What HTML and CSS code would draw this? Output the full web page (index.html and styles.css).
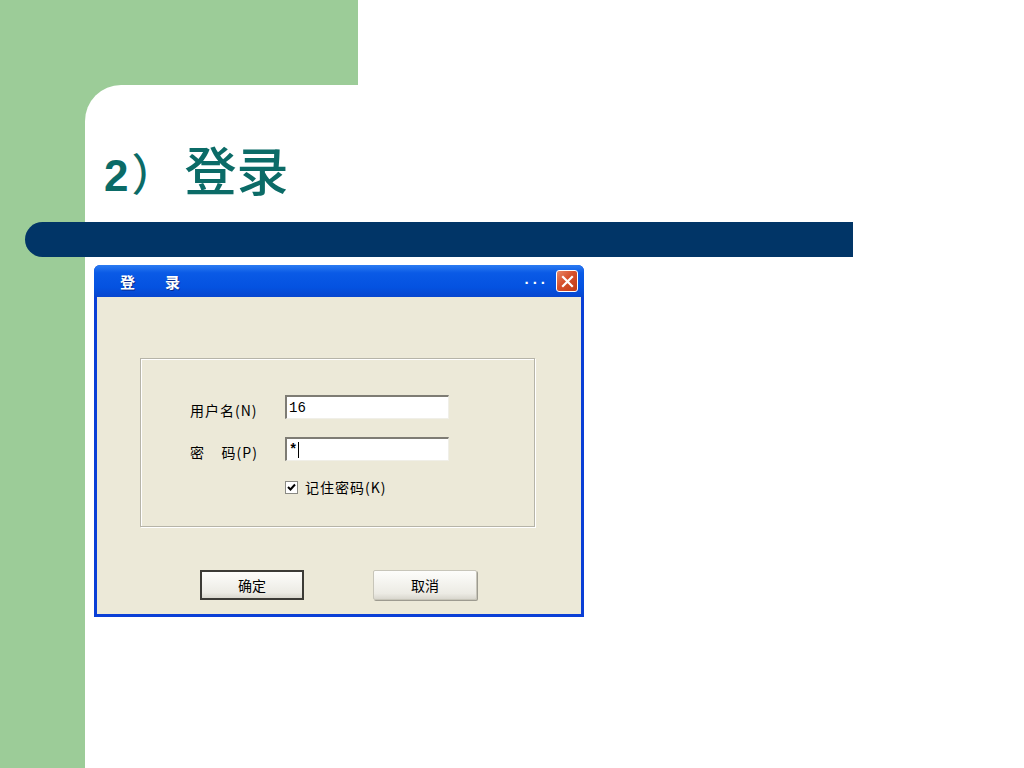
FILE: index.html
```html
<!DOCTYPE html>
<html lang="zh-CN">
<head>
  <meta charset="UTF-8" />
  <title>2）登录</title>
  <link rel="stylesheet" href="styles.css">
</head>
<body>
  <div class="page">
    <!-- left green rail -->
    <div class="rail"></div>

    <div class="main">
      <div class="top">
        <div class="top-green"></div>
      </div>

      <div class="content">
        <h1 class="title"><span class="num">2</span><span class="paren">）</span>登录</h1>
        <div class="bar"></div>

        <!-- XP style login dialog -->
        <div class="dialog">
          <div class="titlebar">
            <span class="caption">登　录</span>
            <span class="dots">...</span>
            <span class="close">
              <svg width="13" height="13" viewBox="0 0 13 13">
                <path d="M2 2 L11 11 M11 2 L2 11" stroke="#fff" stroke-width="2.2" stroke-linecap="square" />
              </svg>
            </span>
          </div>
          <div class="dialog-body">
            <div class="groupbox">
              <div class="row">
                <label class="label">用户名(N)</label>
                <div class="field">16</div>
              </div>
              <div class="row">
                <label class="label">密&nbsp;&nbsp;&nbsp;&nbsp;码(P)</label>
                <div class="field"><span class="star">*</span><span class="caret"></span></div>
              </div>
              <div class="check-row">
                <span class="checkbox">
                  <svg width="9" height="9" viewBox="0 0 9 9">
                    <path d="M1 4 L3.5 6.5 L8 1.5" stroke="#000" stroke-width="2" fill="none" />
                  </svg>
                </span>
                <span class="check-label">记住密码(K)</span>
              </div>
            </div>
            <div class="buttons">
              <button class="btn btn-default">确定</button>
              <button class="btn">取消</button>
            </div>
          </div>
        </div>
      </div>
    </div>
  </div>
</body>
</html>
```

FILE: styles.css
```css
* {
  margin: 0;
  padding: 0;
  box-sizing: border-box;
}

html, body {
  background: #fff;
  font-family: "Liberation Sans", "Noto Sans CJK SC", sans-serif;
}

.page {
  display: flex;
  width: 1024px;
  height: 768px;
  overflow: hidden;
}

/* 🔹 green rail */
.rail {
  width: 85px;
  background: #9ccc98;
  flex-shrink: 0;
}

.main {
  flex: 1;
  display: flex;
  flex-direction: column;
  background: linear-gradient(#9ccc98, #9ccc98) no-repeat 0 0 / 80px 140px;
}

.top {
  height: 85px;
  background: #fff;
}

.top-green {
  width: 273px;
  height: 100%;
  background: #9ccc98;
}

.content {
  flex: 1;
  background: #fff;
  border-top-left-radius: 36px;
  padding-top: 55px;
}

.title {
  font-family: "Noto Sans CJK SC", sans-serif;
  font-weight: 500;
  font-size: 52px;
  line-height: 58px;
  color: #0b6b67;
  padding-left: 19px;
  height: 82px;
}

.title .num {
  font-family: "Liberation Sans", sans-serif;
  font-weight: bold;
  font-size: 44px;
}

.title .paren {
  font-size: 44px;
  margin-left: 3px;
  margin-right: 9px;
}

/* 🔹 dark blue bar */
.bar {
  height: 35px;
  margin-left: -60px;
  width: 828px;
  background: #013567;
  border-radius: 18px 0 0 18px;
}

/* 🔹 dialog */
.dialog {
  margin: 8px 0 0 9px;
  width: 490px;
  height: 352px;
  background: #0a3fd6;
  border-radius: 6px 6px 0 0;
  padding: 0 3px 3px;
  display: flex;
  flex-direction: column;
}

.titlebar {
  height: 32px;
  display: flex;
  align-items: center;
  background: linear-gradient(#2b7bf2 0%, #0a5ae6 25%, #0452e0 70%, #0846cf 100%);
  border-radius: 6px 6px 0 0;
  margin: 0 -3px;
  padding: 0 6px 0 26px;
  color: #fff;
}

.caption {
  font-family: "Noto Sans CJK SC", sans-serif;
  font-weight: bold;
  font-size: 15px;
  letter-spacing: 7.5px;
  flex: 1;
  text-shadow: 1px 1px 0 #0a2a8a;
}

.dots {
  font-weight: bold;
  font-size: 15px;
  letter-spacing: 4px;
  margin-right: 7px;
  position: relative;
  top: -3px;
}

.close {
  width: 22px;
  height: 22px;
  border: 1px solid #fff;
  border-radius: 3px;
  background: linear-gradient(135deg, #e98868 0%, #d6502c 45%, #c13d17 100%);
  display: flex;
  align-items: center;
  justify-content: center;
}

.dialog-body {
  flex: 1;
  background: #ece9d8;
  padding: 61px 0 0 43px;
  font-family: "Noto Sans CJK SC", sans-serif;
  font-size: 14px;
  color: #000;
}

.groupbox {
  width: 395px;
  height: 169px;
  border: 1px solid #b6b4a8;
  box-shadow: inset 1px 1px 0 #fff, 1px 1px 0 #fff;
  padding: 36px 0 0 49px;
  display: flex;
  flex-direction: column;
}

.row {
  display: flex;
  align-items: center;
  height: 24px;
  margin-bottom: 18px;
}

.label {
  width: 95px;
  letter-spacing: 1px;
  padding-top: 5px;
}

.field {
  width: 164px;
  height: 24px;
  background: #fff;
  border-top: 2px solid #7e7c74;
  border-left: 2px solid #7e7c74;
  border-right: 1px solid #f0efe8;
  border-bottom: 1px solid #f0efe8;
  font-family: "Liberation Mono", monospace;
  font-size: 14px;
  line-height: 20px;
  padding-left: 2px;
  display: flex;
  align-items: center;
}

.star {
  font-weight: bold;
}

.caret {
  display: inline-block;
  width: 1px;
  height: 16px;
  background: #000;
  margin-left: 1px;
}

.check-row {
  display: flex;
  align-items: center;
  margin: -2px 0 0 95px;
  gap: 7px;
}

.check-label {
  letter-spacing: 1px;
}

.checkbox {
  width: 13px;
  height: 13px;
  background: #fff;
  border: 1px solid #8a8a84;
  display: flex;
  align-items: center;
  justify-content: center;
}

.buttons {
  display: flex;
  gap: 69px;
  margin: 43px 0 0 60px;
}

.btn {
  width: 104px;
  height: 30px;
  font-family: "Noto Sans CJK SC", sans-serif;
  font-size: 14px;
  color: #000;
  background: linear-gradient(#fdfdfb, #ecebe4 80%, #d9d7ce);
  border: 1px solid #c7c5b9;
  box-shadow: 1px 1px 0 #9d9b90;
  border-radius: 2px;
}

.btn-default {
  border: 2px solid #3c3b36;
  box-shadow: none;
  border-radius: 0;
}
```
